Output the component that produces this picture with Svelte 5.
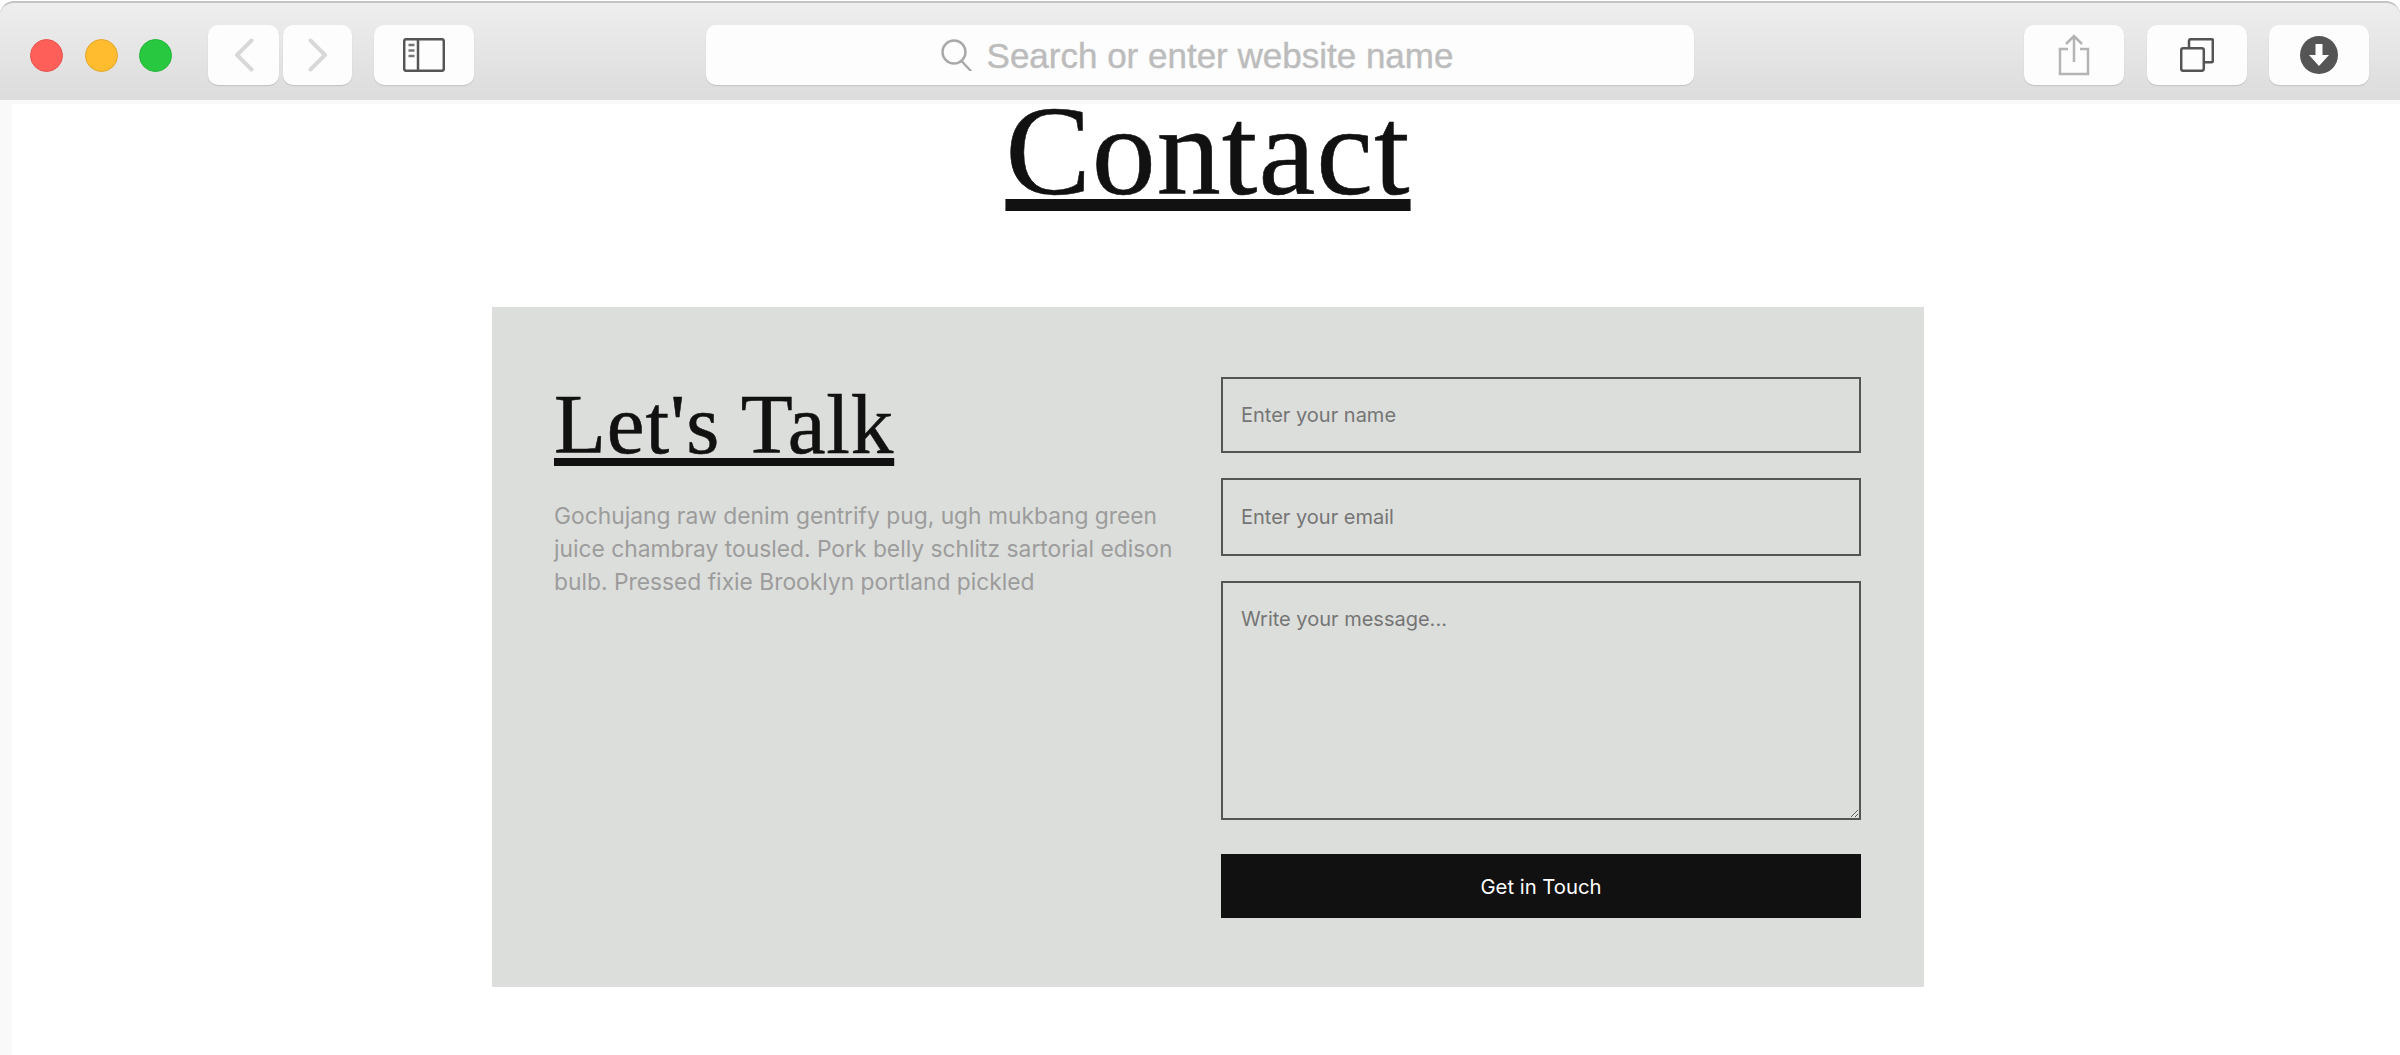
<script lang="ts">
  let name = "";
  let email = "";
  let message = "";
</script>

<div class="window">
  <header class="toolbar">
    <div class="left">
      <div class="lights">
        <span class="light red"></span>
        <span class="light yellow"></span>
        <span class="light green"></span>
      </div>
      <div class="nav">
        <button class="tool back" aria-label="Back">
          <svg width="20" height="34" viewBox="0 0 20 34"><path d="M17.5 2.5 3 17l14.5 14.5" class="faint" /></svg>
        </button>
        <button class="tool fwd" aria-label="Forward">
          <svg width="20" height="34" viewBox="0 0 20 34"><path d="M2.5 2.5 17 17 2.5 31.5" class="faint" /></svg>
        </button>
      </div>
      <button class="tool wide" aria-label="Sidebar">
        <svg width="42" height="34" viewBox="0 0 42 34">
          <rect x="1.2" y="1.2" width="39.6" height="31.6" rx="2" class="dark" />
          <path d="M15 1v32" class="dark" />
          <path d="M5.5 7h6M5.5 12.5h6M5.5 18h6" class="bars" />
        </svg>
      </button>
    </div>

    <div class="address">
      <svg width="32" height="32" viewBox="0 0 32 32">
        <circle cx="13" cy="13" r="11.5" class="glass" />
        <path d="m20.5 22 9 9.5" class="glass" />
      </svg>
      <span>Search or enter website name</span>
    </div>

    <div class="right">
      <button class="tool wide" aria-label="Share">
        <svg width="32" height="42" viewBox="0 0 32 42">
          <path d="M10 15H2v25h28V15h-8" class="share" />
          <path d="M16 28V2M8 10l8-8 8 8" class="share" />
        </svg>
      </button>
      <button class="tool wide" aria-label="Tabs">
        <svg width="34" height="34" viewBox="0 0 34 34">
          <rect x="1.2" y="10.2" width="22.6" height="22.6" rx="2" class="dark" />
          <path d="M9 10V3.2q0-2 2-2h20.8q1 0 1 1v21q0 1-1 1H25" class="dark" />
        </svg>
      </button>
      <button class="tool wide" aria-label="Downloads">
        <svg width="38" height="38" viewBox="0 0 38 38">
          <circle cx="19" cy="19" r="19" fill="#555" />
          <path d="M15.5 8h7v11h6.5L19 30 9 19h6.5z" fill="#fff" />
        </svg>
      </button>
    </div>
  </header>

  <main class="page">
    <h1>Contact</h1>

    <section class="card">
      <div class="intro">
        <h2>Let's Talk</h2>
        <p>
          Gochujang raw denim gentrify pug, ugh mukbang green juice chambray tousled. Pork belly
          schlitz sartorial edison bulb. Pressed fixie Brooklyn portland pickled
        </p>
      </div>

      <form class="fields" on:submit|preventDefault>
        <input type="text" placeholder="Enter your name" bind:value={name} />
        <input type="email" placeholder="Enter your email" bind:value={email} />
        <textarea placeholder="Write your message..." bind:value={message}></textarea>
        <button class="submit" type="submit">Get in Touch</button>
      </form>
    </section>
  </main>
</div>

<style>
  :global(body) {
    background: #fff;
  }

  .window {
    min-height: 1055px;
    display: flex;
    flex-direction: column;
    overflow: hidden;
  }

  .toolbar {
    height: 99px;
    margin-top: 1px;
    box-sizing: border-box;
    display: flex;
    align-items: flex-start;
    padding: 22px 31px 0 30px;
    border-top: 2px solid #c4c4c4;
    border-radius: 14px 14px 0 0;
    background: linear-gradient(#eeeeee, #dcdcdc);
  }

  .left,
  .right,
  .nav,
  .lights {
    display: flex;
    align-items: center;
  }

  .lights {
    gap: 21.5px;
    margin-right: 36px;
    height: 60px;
  }

  .light {
    width: 33px;
    height: 33px;
    box-sizing: border-box;
    border-radius: 50%;
  }

  .red {
    background: #fe5f58;
    border: 1px solid #e9524e;
  }

  .yellow {
    background: #febc2e;
    border: 1px solid #e5a62a;
  }

  .green {
    background: #28c840;
    border: 1px solid #22b636;
  }

  .nav {
    gap: 4px;
    margin-right: 22px;
  }

  .tool {
    height: 60px;
    padding: 0;
    border: 0;
    border-radius: 10px;
    display: flex;
    align-items: center;
    justify-content: center;
    background: #fdfdfd;
    box-shadow: 0 1px 1px #c2c2c2;
  }

  .back {
    width: 71px;
  }

  .fwd {
    width: 69px;
  }

  .wide {
    width: 100px;
  }

  .right {
    gap: 22.5px;
    margin-left: auto;
  }

  svg {
    display: block;
    fill: none;
    flex: none;
  }

  .faint {
    stroke: #d8d8d8;
    stroke-width: 4;
    stroke-linecap: round;
    stroke-linejoin: round;
  }

  .dark {
    stroke: #555;
    stroke-width: 2.5;
    fill: none;
  }

  .bars {
    stroke: #777;
    stroke-width: 2.5;
  }

  .glass {
    stroke: #a8a8a8;
    stroke-width: 2.4;
    stroke-linecap: round;
  }

  .share {
    stroke: #b4b4b4;
    stroke-width: 2.5;
  }

  .address {
    width: 988px;
    height: 60px;
    box-sizing: border-box;
    margin-left: 232px;
    padding-right: 6px;
    display: flex;
    align-items: center;
    justify-content: center;
    gap: 14px;
    border-radius: 10px;
    background: #fdfdfd;
    box-shadow: 0 1px 1px #c2c2c2;
    font: 35px "Liberation Sans", sans-serif;
    color: #bcbcbc;
    -webkit-text-stroke: 0.4px #bcbcbc;
  }

  .address span {
    padding-top: 2px;
  }

  .page {
    flex: 1;
    padding-left: 16px;
    background: #fff;
    box-shadow: inset 12px 4px 0 #f9f9f9;
    display: flex;
    flex-direction: column;
  }

  h1,
  h2 {
    margin: 0;
    font-family: "Liberation Serif", serif;
    font-weight: 400;
    color: #111;
    text-decoration: underline;
    text-decoration-skip-ink: none;
    -webkit-text-stroke: 0.6px #111;
  }

  h1 {
    font-size: 128px;
    line-height: 102px;
    letter-spacing: 1px;
    text-align: center;
    text-decoration-thickness: 12px;
    text-underline-offset: 5px;
  }

  .card {
    width: 1432px;
    box-sizing: border-box;
    margin: 105px auto 0;
    padding: 70px 63px 69px 62px;
    display: grid;
    grid-template-columns: 640px 640px;
    gap: 27px;
    background: #dcdedb;
  }

  h2 {
    margin-top: 5px;
    font-size: 85px;
    line-height: 1;
    letter-spacing: 0.9px;
    text-decoration-thickness: 8px;
    text-underline-offset: 5px;
  }

  p {
    margin: 32px 0 0;
    font: 22.8px/33px Inter, sans-serif;
    color: #9c9c9c;
  }

  .fields {
    display: flex;
    flex-direction: column;
  }

  input,
  textarea {
    box-sizing: border-box;
    width: 100%;
    display: block;
    border: 2px solid #555;
    border-radius: 0;
    padding: 0 18px;
    background: transparent;
    font: 20px Inter, sans-serif;
    outline: none;
  }

  input {
    height: 76px;
    margin-bottom: 25px;
  }

  input[type="email"] {
    height: 78px;
  }

  textarea {
    height: 239px;
    padding-top: 24px;
    margin-bottom: 34px;
  }

  input::placeholder,
  textarea::placeholder {
    color: #757575;
    opacity: 1;
  }

  .submit {
    height: 64px;
    border: 0;
    background: #111;
    color: #fff;
    font: 20.3px Inter, sans-serif;
  }
</style>
